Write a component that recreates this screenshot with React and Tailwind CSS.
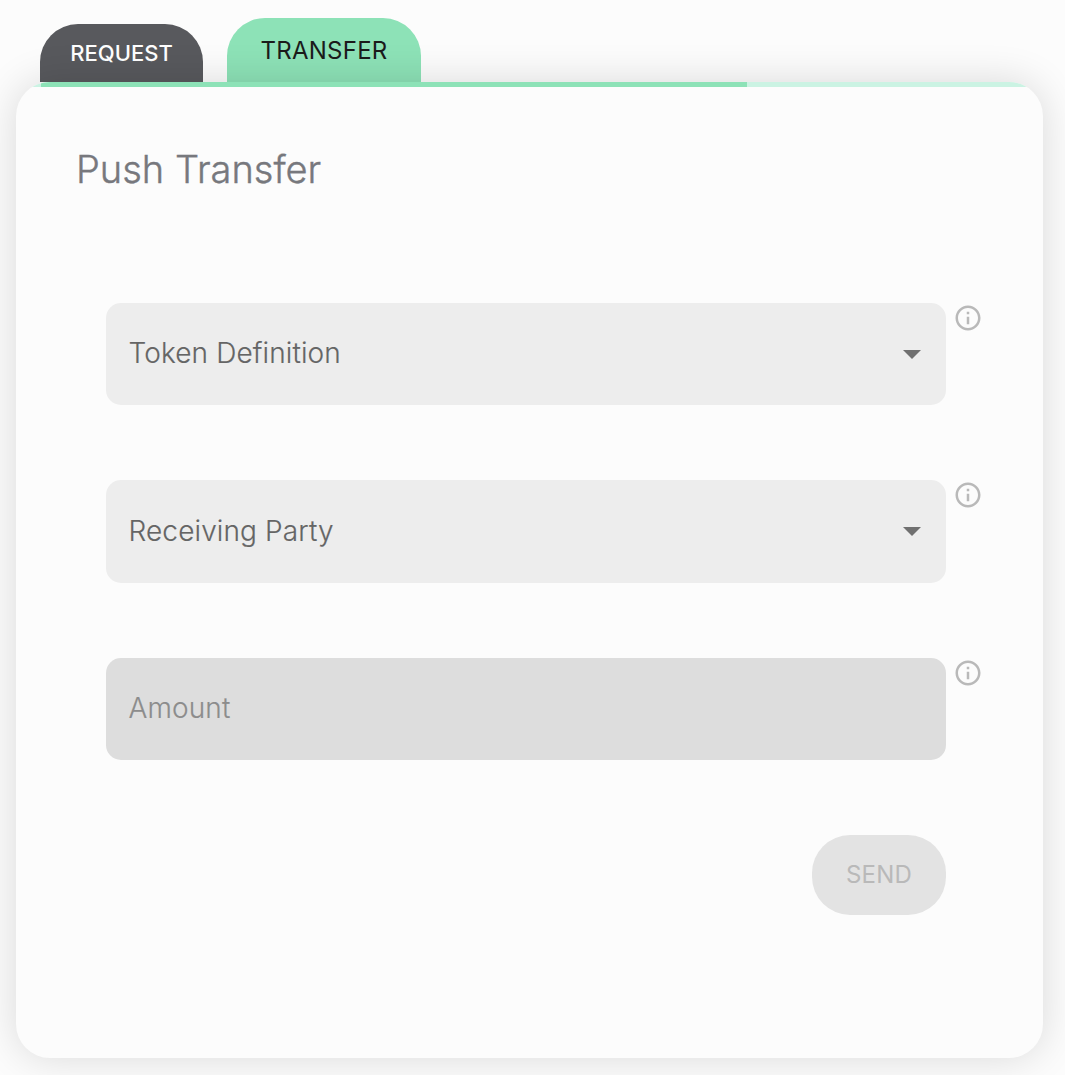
const font = "font-['Inter',sans-serif]";

function Info() {
  return (
    <svg viewBox="0 0 24 24" className="ml-[7px] h-[30px] w-[30px] fill-[#b9b9b9]">
      <path d="M11 7h2v2h-2zm0 4h2v6h-2zm1-9C6.48 2 2 6.48 2 12s4.48 10 10 10 10-4.48 10-10S17.52 2 12 2m0 18c-4.41 0-8-3.59-8-8s3.59-8 8-8 8 3.59 8 8-3.59 8-8 8" />
    </svg>
  );
}

function Field({ label, select }) {
  return (
    <div className="flex">
      <div className={"flex h-[102.4px] w-[840px] items-center justify-between rounded-[15px] pr-[25px] pl-[22.5px] " + (select ? "bg-[#ededed] text-[#656565]" : "bg-[#dddddd] text-[#8c8c8c]")}>
        <span className="pb-[2px] text-[28px] leading-10 font-light tracking-[0.12px] [-webkit-text-stroke:0.15px]">{label}</span>
        {select && (
          <svg viewBox="0 0 18 9" className="h-[9px] w-[18px] fill-[#707070]">
            <path d="M0 0h18L9 9z" />
          </svg>
        )}
      </div>
      <Info />
    </div>
  );
}

export default function App() {
  return (
    <div className={"h-[1075px] w-[1065px] overflow-hidden bg-[#fcfcfc] pl-4 " + font}>
      <div className="flex h-[82px] items-end gap-6 pl-6">
        <button className="h-[57.6px] w-[163px] rounded-t-[38px] bg-[#58595d] text-[22px] font-medium text-white">REQUEST</button>
        <button className="h-16 w-[194px] rounded-t-[38px] bg-[#8de2b7] pt-[2px] text-[24px] tracking-[0.25px] text-[#1b1b1b]">TRANSFER</button>
      </div>
      <div className="relative h-[976px] w-[1027px] overflow-hidden rounded-[34px] bg-[#fcfcfc] shadow-[0_0_40px_rgba(0,0,0,0.14)]">
        <div className="h-[5px] bg-[#cbf3e3] pl-[25px]">
          <div className="h-full w-[706px] bg-[#8de2b7]" />
        </div>
        <h1 className="mt-[57px] ml-[60px] text-[38px] leading-[50px] font-light text-[#77787d] [-webkit-text-stroke:0.4px]">Push Transfer</h1>
        <div className="mt-[109px] ml-[90px] flex flex-col gap-[75px]">
          <Field label="Token Definition" select />
          <Field label="Receiving Party" select />
          <Field label="Amount" />
        </div>
        <button className="mt-[74.8px] ml-[796px] h-20 w-[134px] rounded-[38px] bg-[#e3e3e3] text-[24px] tracking-[0.2px] text-[#b9b9b9]">SEND</button>
      </div>
    </div>
  );
}
